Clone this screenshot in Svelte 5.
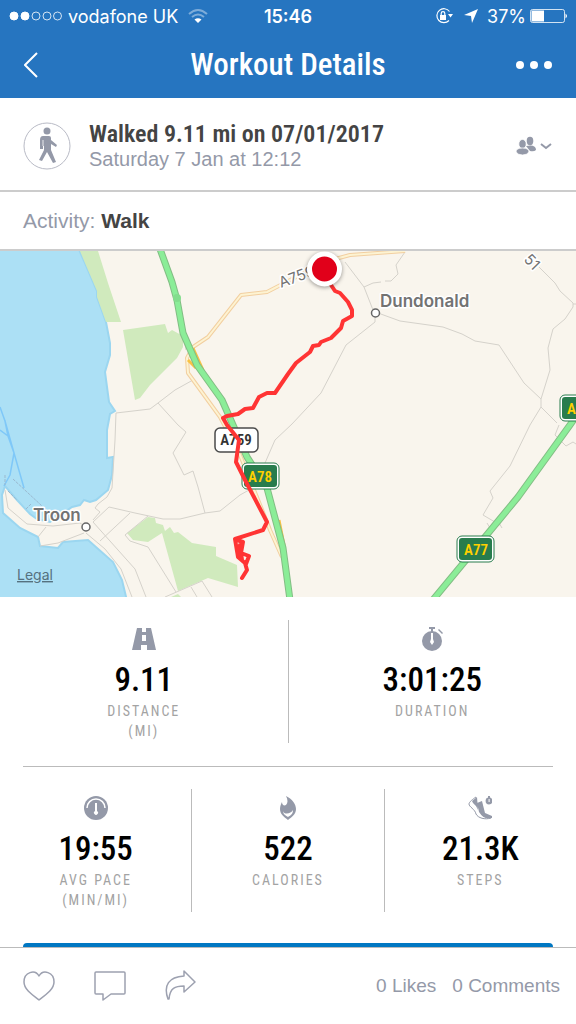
<script lang="ts">
  interface Stat {
    icon: 'road' | 'stopwatch' | 'gauge' | 'flame' | 'shoe';
    value: string;
    label: string;
    unit?: string;
  }

  const totals: Stat[] = [
    { icon: 'road', value: '9.11', label: 'Distance', unit: '(mi)' },
    { icon: 'stopwatch', value: '3:01:25', label: 'Duration' }
  ];

  const details: Stat[] = [
    { icon: 'gauge', value: '19:55', label: 'Avg pace', unit: '(min/mi)' },
    { icon: 'flame', value: '522', label: 'Calories' },
    { icon: 'shoe', value: '21.3K', label: 'Steps' }
  ];

  const trunkRoads = [
    'M160 249L172 282 177 300 183 333 197 365 222 400 233 425 247 457 267 488 283 548 290 600',
    'M582 408L570 425 518 497 485 537 432 601'
  ];

  const localRoads = [
    'M405 251L350 255 324 262 298 276 267 292 241 295 208 337 193 347 187 358 188 373 220 417 240 455 267 522 270 530 282 557'
  ];

  const minorRoads = [
    'M193 380L175 390 158 403 150 409 116 413 115 440 112 488 107 497 98 504 95 508 100 512 93 520',
    'M158 403L178 425 186 432 173 453 184 475 193 471 198 487 205 513',
    'M183 333L186 350',
    'M93 522L109 507 135 513 163 519 180 519 205 513 220 511 240 495 249 490',
    'M375 314L375 322 346 345 321 393 292 424 275 440 265 463',
    'M5 490L8 508 27 524 53 526 80 523 86 527M38 537L46 527M40 546L58 543 84 533',
    'M130 513L100 541M93 522L135 569 146 597M86 533L105 549 121 569 132 597',
    'M148 516L125 535 130 541 148 547 176 592M165 597L202 581 212 597M191 587L197 597',
    'M539 267L555 283 560 291 573 303 573 307 565 319 553 329 548 348 550 370 541 399 541 407 557 423',
    'M573 304L576 304',
    'M541 407L530 425 510 466 490 491 493 498 483 515 500 525',
    'M487 523L490 528M498 521L502 528',
    'M559 425L555 435 566 446 573 442 576 444',
    'M378 313L400 321 443 327 462 334 475 341 499 345 524 383 541 399',
    'M345 262L364 287 373 310M364 287L373 283 381 282M385 281L391 281 398 274 396 265 405 252'
  ];
</script>

{#snippet statIcon(name: Stat['icon'])}
  <svg class="stat-icon" viewBox="0 0 24 24" aria-hidden="true">
    {#if name === 'road'}
      <path fill-rule="evenodd" d="M5 1h5v4h4V1h5l5 22h-9v-5H9v5H0zM10 8v6h4V8z" />
    {:else if name === 'stopwatch'}
      <circle cx="12" cy="14" r="10" />
      <path d="M9 0h6v2h-2v3h-2V2H9zM18 3l1-1 4 4-1 1z" />
      <path class="cut" d="M11 6h2v6l1 3-2 3-2-3 1-3z" />
    {:else if name === 'gauge'}
      <circle cx="12" cy="12" r="12" />
      <path class="cut-line" d="M3 12a9 9 0 0 1 18 0" />
      <path class="cut" d="M11 7h2v8a2 2 0 1 1-2 0z" />
    {:else if name === 'flame'}
      <path d="M10 0c6 3 10 8 10 13 0 5-4 8-8 11-4-3-8-6-8-11 0-3 1-5 2-7 0 3 2 4 4 3 2-2 2-5 0-9z" />
      <path class="cut" d="M7 15c1 4 8 3 10-1 0 4-2 5-5 7-3-2-5-3-5-6z" />
    {:else}
      <path d="M9 7l5-2 3 12 7 3v2c-6 1-9 0-13-6zM4 5l5-4 1 13-2-4-3-3z" />
      <path class="outline" d="M8 1C5 3 1 6 1 8c0 3 6 5 7 10 2 4 9 6 15 4" />
      <circle cx="21" cy="5" r="3.4" />
      <path class="cut" d="M20.600 3h1v3h-1z" />
      <path d="M20 0h2v2h-2z" />
    {/if}
  </svg>
{/snippet}

{#snippet statRow(stats: Stat[])}
  <dl class="stat-row">
    {#each stats as stat (stat.label)}
      <div class="stat">
        {@render statIcon(stat.icon)}
        <dd>{stat.value}</dd>
        <dt>
          {stat.label}
          {#if stat.unit}<span>{stat.unit}</span>{/if}
        </dt>
      </div>
    {/each}
  </dl>
{/snippet}

<div class="screen">
  <header>
    <div class="status">
      <div class="carrier">
        <svg width="54" height="12" viewBox="0 0 54 12" aria-label="Signal strength">
          <g fill="#fff" stroke="#fff">
            <circle cx="6" cy="6" r="4" />
            <circle cx="17" cy="6" r="4" />
          </g>
          <g fill="none" stroke="#fff" stroke-width=".8">
            <circle cx="28" cy="6" r="4" />
            <circle cx="39" cy="6" r="4" />
            <circle cx="49.500" cy="6" r="4" />
          </g>
        </svg>
        <span>vodafone UK</span>
        <svg width="20" height="16" viewBox="0 0 20 16" aria-label="Wi-Fi">
          <g fill="none" stroke="#fff" stroke-width="2" opacity=".4">
            <path d="M1 6q9-8 18 0" />
            <path d="M4 9q6-5 12 0" />
          </g>
          <path d="M6.500 11.500q3.500-2.500 7 0L10 15z" fill="#fff" />
        </svg>
      </div>
      <time>15:46</time>
      <div class="power">
        <svg class="lock" width="18" height="18" viewBox="0 0 18 18" aria-label="Rotation lock">
          <path d="M14.500 4.500A7 7 0 1 0 14 13.500" fill="none" stroke="#fff" stroke-width="1.200" />
          <path d="M13 7h5l-2.500 3.500zM5 8h6v5H5z" fill="#fff" />
          <path d="M6.200 8V6.500a1.800 1.800 0 0 1 3.600 0V8" fill="none" stroke="#fff" stroke-width="1.200" />
        </svg>
        <svg width="16" height="16" viewBox="0 0 16 16" aria-label="Location">
          <path d="M15 1L9 15 8 8 1 7z" fill="#fff" />
        </svg>
        <span>37%</span>
        <svg width="38" height="16" viewBox="0 0 38 16" aria-label="Battery">
          <rect x=".5" y="1.500" width="34" height="13" rx="2" fill="none" stroke="#fff" stroke-width=".8" />
          <path d="M1.500 2.500h12.500v11H1.500zM35.500 5.500q3 2.500 0 5z" fill="#fff" />
        </svg>
      </div>
    </div>
    <nav>
      <button type="button" aria-label="Back">
        <svg width="14" height="26" viewBox="0 0 14 26">
          <path d="M13 1L1 13l12 12" fill="none" stroke="#fff" stroke-width="2" />
        </svg>
      </button>
      <h1>Workout Details</h1>
      <button type="button" aria-label="More">
        <svg width="36" height="8" viewBox="0 0 36 8" fill="#fff">
          <circle cx="4" cy="4" r="4" />
          <circle cx="18" cy="4" r="4" />
          <circle cx="32" cy="4" r="4" />
        </svg>
      </button>
    </nav>
  </header>

  <main>
    <section class="summary">
      <svg class="avatar" viewBox="0 0 48 48" aria-hidden="true">
        <circle cx="24" cy="24" r="23" fill="none" stroke="#b9bbc6" />
        <g fill="#9499a8">
          <circle cx="24" cy="9" r="3.500" />
          <path d="M20 14h6q2 0 2 2v2l6 5-1 2-5-3v6l5 12-3 1-6-11-5 9-3-1 5-10V24h-1v3h-3v-9q0-4 3-4z" />
        </g>
        <path d="M20 18v6" stroke="#fff" stroke-width=".8" />
      </svg>
      <div class="heading">
        <h2>Walked 9.11 mi on 07/01/2017</h2>
        <p>Saturday 7 Jan at 12:12</p>
      </div>
      <button type="button" class="privacy" aria-label="Friends can see this">
        <svg width="36" height="20" viewBox="0 0 36 20">
          <g fill="#9499a8">
            <ellipse cx="14" cy="5" rx="3.300" ry="4.200" />
            <path d="M10 10q10-2 10 4-2 2-6 1z" />
          </g>
          <g fill="#9499a8" stroke="#fff" stroke-width=".8">
            <ellipse cx="6.500" cy="8" rx="3.700" ry="4.600" />
            <path d="M0 16q0-4 6.500-4T13 16q-2 3-6.500 3T0 16z" />
          </g>
          <path d="M25 8l5 4 5-4" fill="none" stroke="#9499a8" stroke-width="2" />
        </svg>
      </button>
    </section>

    <section class="activity">Activity: <strong>Walk</strong></section>

    <svg class="map" viewBox="0 251 576 346" role="img" aria-label="Route map">
      <rect y="251" width="576" height="346" fill="#f9f5ed" />
      <path
        class="water"
        d="M-8 240H76L80 252 85 263 97 291 97 297 106 322 110 343 110 355 105 372 109 402 115 411 110 414 107 430 107 458 113 457 112 475 108 490 96 500 90 502 84 500 80 505 72 507 50 522 37 519 30 514 17 500 5 486 2 495 3 513 20 528 38 537 40 546 58 548 63 542 88 540 113 562 122 580 128 605H-8z"
      />
      <g class="park">
        <path d="M80 251H98L108 283 121 322H106L97 297V291L85 263z" />
        <path d="M123 330L165 324 168 333 172 330 183 336V347L177 358 150 385 140 398 135 400z" />
        <path d="M127 533L148 517 155 518 156 523 163 525 165 531 170 527 174 533 178 532 192 543 216 547V556L237 565 238 587 208 578 178 591 162 533 148 542 133 540z" />
        <path d="M171 597L178 594 181 597z" />
      </g>
      <path class="ferry" d="M0 407L5 421 14 453 24 488M0 430L8 436 14 453 10 475 4 486M5 421L8 436" />
      <path class="dock" d="M13 479L42 506M5 475V485M8 491L17 500M26 509L31 504" />
      {#each minorRoads as road}
        <path class="minor" d={road} />
      {/each}
      {#each localRoads as road}
        <path class="local-casing" d={road} />
        <path class="local" d={road} />
      {/each}
      <path class="junction" d="M193 348L203 370M188 360L196 368M279 520L284 545" />
      {#each trunkRoads as road}
        <path class="trunk-casing" d={road} />
        <path class="trunk" d={road} />
      {/each}
      <circle cx="177" cy="298" r="4" fill="#83dd8d" />

      <text x="281" y="288" class="road-name" transform="rotate(-20 281 288)">A759</text>
      <text x="523" y="260" class="road-name" transform="rotate(46 523 260)">51</text>

      <g class="place">
        <circle cx="375.500" cy="313" r="4" />
        <text x="380" y="307">Dundonald</text>
        <circle cx="86" cy="527" r="4" />
        <text x="33" y="521">Troon</text>
      </g>

      <g class="shield">
        <rect x="215" y="428" width="43" height="24" rx="5" fill="#fff" stroke="#4b4b4b" stroke-width="1.500" />
        <text x="236" y="445" fill="#333">A759</text>
      </g>
      <g class="shield green">
        <rect class="rim" x="242" y="463" width="37" height="26" rx="5" />
        <rect class="face" x="244" y="465" width="33" height="22" rx="3" />
        <text x="260" y="482">A78</text>
        <rect class="rim" x="457" y="536" width="37" height="26" rx="5" />
        <rect class="face" x="459" y="538" width="33" height="22" rx="3" />
        <text x="476" y="555">A77</text>
        <rect class="rim" x="560" y="395" width="37" height="26" rx="5" />
        <rect class="face" x="562" y="397" width="33" height="22" rx="3" />
        <text x="579" y="414">A77</text>
      </g>

      <path
        class="route"
        d="M328 278L331 285 335 291 340 293 348 302 352 310 352 316 343 321 341 328 331 338 321 342 319 345 313 346 310 352 296 363 288 374 275 393 267 393 259 397 253 408 245 409 238 414 227 416 223 418 227 425 239 440 236 462 245 480 267 522 263 530 235 539 238 557 245 563 247 570 242 578M237 540L243 542 241 553 249 556 246 564M240 545L242 560"
      />
      <circle class="pin" cx="324.500" cy="269" r="15" />
      <text x="17" y="580" class="legal">Legal</text>
    </svg>

    <section class="stats">
      {@render statRow(totals)}
      <hr />
      {@render statRow(details)}
      <button type="button" class="primary" aria-label="View full workout"></button>
    </section>
  </main>

  <footer>
    <div class="actions">
      <button type="button" aria-label="Like">
        <svg width="32" height="32" viewBox="0 0 32 32">
          <path d="M16 6C12-1 1 2 1 12c0 7 7 12 15 18 8-6 15-11 15-18C31 2 20-1 16 6z" />
        </svg>
      </button>
      <button type="button" aria-label="Comment">
        <svg width="32" height="32" viewBox="0 0 32 32">
          <path d="M2 2h28q1 0 1 1v20q0 1-1 1H17l-8 6v-6H2q-1 0-1-1V3q0-1 1-1z" />
        </svg>
      </button>
      <button type="button" aria-label="Share">
        <svg width="32" height="32" viewBox="0 0 32 32">
          <path d="M19 1l11 11-11 10v-6C10 16 5 18 4 29H3C-2 15 4 7 19 6z" />
        </svg>
      </button>
    </div>
    <div class="counts">
      <a href="#likes">0 Likes</a>
      <a href="#comments">0 Comments</a>
    </div>
  </footer>
</div>

<style>
  :global(body) {
    margin: 0;
    background: #fff;
  }

  .screen {
    display: flex;
    flex-direction: column;
    height: 100vh;
    overflow: hidden;
    font-family: 'Liberation Sans', Arial, sans-serif;
    color: #9499a8;
  }

  h1,
  h2,
  p,
  dl,
  dd {
    margin: 0;
  }

  svg {
    display: block;
    flex: none;
  }

  button {
    display: block;
    padding: 0;
    border: 0;
    background: none;
    cursor: pointer;
  }

  header {
    flex: none;
    background: #2675c0;
    color: #fff;
  }

  .status {
    display: grid;
    grid-template-columns: 1fr auto 1fr;
    align-items: center;
    height: 32px;
    padding: 0 8px;
    font-family: Inter, sans-serif;
    font-size: 18px;
  }

  .carrier,
  .power {
    display: flex;
    align-items: center;
  }

  .carrier {
    gap: 6px;
  }

  .carrier svg:last-child {
    margin-left: 4px;
  }

  .power {
    justify-content: flex-end;
    gap: 4px;
  }

  .power .lock {
    margin-right: 6px;
  }

  .power span {
    margin-left: 4px;
  }

  .status time {
    font-weight: 600;
  }

  nav {
    display: flex;
    align-items: center;
    justify-content: space-between;
    height: 66px;
    padding: 0 24px;
  }

  nav button {
    width: 36px;
  }

  h1,
  h2,
  dd,
  dt,
  .shield {
    font-family: 'Roboto Condensed', 'Liberation Sans Narrow', 'Arial Narrow', sans-serif;
  }

  h1 {
    font-size: 31px;
    line-height: 40px;
    font-weight: 500;
  }

  main {
    flex: 1;
    min-height: 0;
    overflow-y: auto;
    scrollbar-width: none;
  }

  .summary {
    display: flex;
    align-items: center;
    height: 89px;
    padding: 3px 24px 0 23px;
    border-bottom: 2px solid #ccc;
  }

  .avatar {
    width: 48px;
    height: 48px;
  }

  .heading {
    flex: 1;
    padding-left: 18px;
  }

  h2 {
    color: #444;
    font-size: 24px;
    line-height: 26px;
    font-weight: 600;
  }

  .heading p {
    font-size: 20px;
    line-height: 24px;
  }

  .activity {
    padding: 0 23px;
    border-bottom: 2px solid #ccc;
    font-size: 21px;
    line-height: 57px;
  }

  .activity strong {
    color: #444;
  }

  .map {
    width: 100%;
    height: auto;
  }

  .water {
    fill: #ace0f5;
    stroke: #9bd6f0;
    stroke-width: 2;
  }

  .park {
    fill: #d0eabd;
  }

  .ferry,
  .dock,
  .minor,
  .local,
  .local-casing,
  .trunk,
  .trunk-casing,
  .junction,
  .route {
    fill: none;
    stroke-linejoin: round;
  }

  .ferry {
    stroke: #7fc8f8;
    stroke-width: 1.5;
  }

  .dock {
    stroke: #9ab9cf;
    stroke-dasharray: 3 1;
  }

  .minor {
    stroke: #d5d2cb;
  }

  .local-casing {
    stroke: #f2cfa0;
    stroke-width: 4;
  }

  .local {
    stroke: #fdf3d2;
    stroke-width: 2;
  }

  .junction {
    stroke: #f8c244;
    stroke-width: 3;
  }

  .trunk-casing {
    stroke: #83bd84;
    stroke-width: 7;
  }

  .trunk {
    stroke: #8bed98;
    stroke-width: 5;
  }

  .road-name,
  .place text,
  .legal {
    font-family: Inter, sans-serif;
    fill: #737373;
    paint-order: stroke;
    stroke: #fff;
    stroke-width: 3px;
    stroke-linejoin: round;
  }

  .road-name {
    font-size: 15px;
  }

  .place text {
    font-size: 17px;
    font-weight: 600;
  }

  .place circle {
    fill: #fff;
    stroke: #666;
    stroke-width: 1.5;
  }

  .legal {
    font-size: 14px;
    fill: #55717f;
    stroke: none;
    text-decoration: underline;
  }

  .shield {
    font-size: 15px;
    font-weight: 600;
    text-anchor: middle;
  }

  .rim {
    fill: #fff;
    stroke: #287c4d;
  }

  .face {
    fill: #287c4d;
  }

  .green text {
    fill: #ffd000;
  }

  .route {
    stroke: #ff3434;
    stroke-width: 4;
    stroke-linecap: round;
  }

  .pin {
    fill: #e1001a;
    stroke: #fff;
    stroke-width: 5;
    filter: drop-shadow(0 1px 2px rgba(0, 0, 0, 0.4));
  }

  .stats {
    padding-top: 23px;
  }

  .stat-row {
    display: flex;
  }

  .stat {
    flex: 1;
    display: flex;
    flex-direction: column;
    align-items: center;
    box-sizing: border-box;
    height: 123px;
    padding-top: 7px;
  }

  .stat + .stat {
    border-left: 1px solid #bbb;
  }

  .stat-icon {
    width: 24px;
    height: 24px;
    fill: #9499a8;
  }

  .cut {
    fill: #fff;
  }

  .cut-line {
    fill: none;
    stroke: #fff;
    stroke-width: 1.5;
  }

  .outline {
    fill: none;
    stroke: #9499a8;
  }

  dd {
    margin-top: 8px;
    color: #000;
    font-size: 33px;
    line-height: 42px;
    font-weight: 500;
  }

  dt {
    order: 1;
    color: #a3a3a3;
    font-size: 14px;
    line-height: 20px;
    letter-spacing: 2px;
    text-align: center;
    text-transform: uppercase;
  }

  dt span {
    display: block;
  }

  hr {
    margin: 23px 23px 22px;
    border: 0;
    border-top: 1px solid #bbb;
  }

  .primary {
    width: calc(100% - 46px);
    height: 52px;
    margin: 31px 23px;
    border-radius: 4px;
    background: #0077c2;
  }

  footer {
    display: flex;
    align-items: center;
    justify-content: space-between;
    flex: none;
    height: 76px;
    padding: 0 16px 0 23px;
    border-top: 1px solid #bbb;
  }

  .actions {
    display: flex;
    gap: 39px;
  }

  .actions svg {
    fill: none;
    stroke: #9da1b0;
    stroke-width: 1.5;
    stroke-linejoin: round;
  }

  .counts {
    display: flex;
    gap: 16px;
    font-size: 19px;
  }

  .counts a {
    color: inherit;
    text-decoration: none;
  }
</style>
